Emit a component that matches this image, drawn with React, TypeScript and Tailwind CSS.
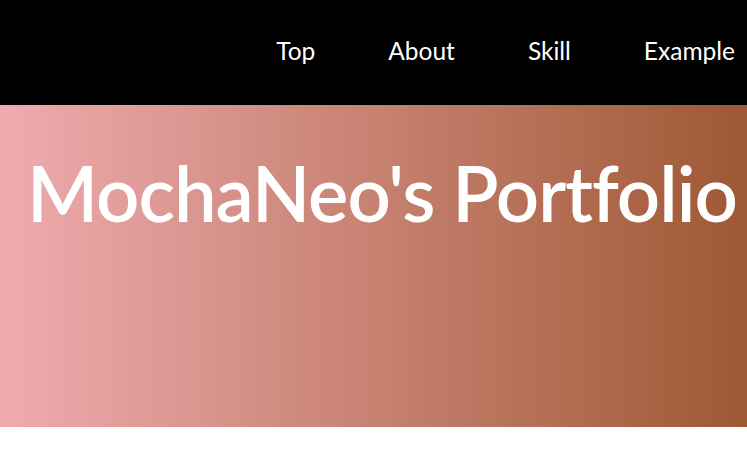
import React from "react";

const navItems = ["Top", "About", "Skill", "Example"];

const App = () => {
  return (
    <div className="w-full min-h-screen bg-white font-['Lato',sans-serif]">
      <header className="h-[105px] bg-black flex items-center justify-end pr-[12px]">
        <ul className="flex items-center gap-[73px] pb-[2px]">
          {navItems.map((item) => (
            <li key={item} className="text-white text-[24.5px] leading-none">
              {item}
            </li>
          ))}
        </ul>
      </header>
      <section className="h-[322px] bg-[linear-gradient(to_right,#efabaf,#9e5834)] pt-[50px] pl-[27px]">
        <h1 className="text-white text-[76px] leading-none font-semibold tracking-[-1px] whitespace-nowrap">
          MochaNeo's Portfolio
        </h1>
      </section>
    </div>
  );
};

export default App;
